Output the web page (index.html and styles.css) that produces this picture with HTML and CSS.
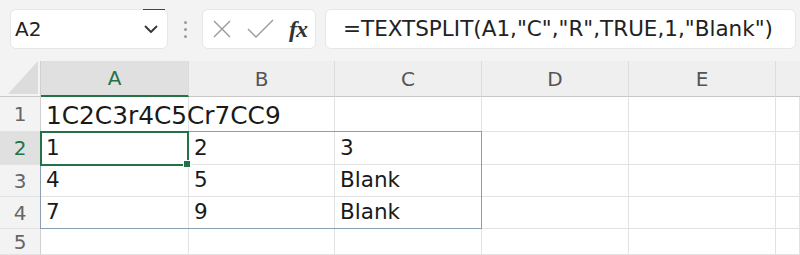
FILE: index.html
```html
<!DOCTYPE html>
<html>
<head>
<meta charset="utf-8">
<link rel="stylesheet" href="styles.css">
</head>
<body>
<div class="toolbar">
  <div class="namebox">
    <span class="namebox-text">A2</span>
    <svg class="chevron" width="14" height="9" viewBox="0 0 14 9"><path d="M1.5 1.5 L7 7 L12.5 1.5" fill="none" stroke="#333" stroke-width="1.8" stroke-linecap="round" stroke-linejoin="round"/></svg>
    <span class="grip"></span>
  </div>
  <div class="dots"><i></i><i></i><i></i></div>
  <div class="fxbox">
    <svg class="icon-x" width="20" height="20" viewBox="0 0 20 20"><path d="M2 2 L18 18 M18 2 L2 18" stroke="#9a9a9a" stroke-width="1.4" fill="none"/></svg>
    <svg class="icon-check" width="28" height="20" viewBox="0 0 28 20"><path d="M1 10 L9 18 L26 1" stroke="#9a9a9a" stroke-width="1.4" fill="none"/></svg>
    <span class="fx">fx</span>
  </div>
  <div class="formula">=TEXTSPLIT(A1,"C","R",TRUE,1,"Blank")</div>
</div>
<div class="sheet">
  <div class="corner"><span class="tri"></span></div>
  <div class="ch sel">A</div><div class="ch">B</div><div class="ch">C</div><div class="ch">D</div><div class="ch">E</div><div class="ch last"></div>

  <div class="rh">1</div>
  <div class="c wide">1C2C3r4C5Cr7CC9</div><div class="c"></div><div class="c"></div><div class="c"></div><div class="c"></div><div class="c"></div>

  <div class="rh sel">2</div>
  <div class="c">1</div><div class="c">2</div><div class="c">3</div><div class="c"></div><div class="c"></div><div class="c"></div>

  <div class="rh">3</div>
  <div class="c">4</div><div class="c">5</div><div class="c">Blank</div><div class="c"></div><div class="c"></div><div class="c"></div>

  <div class="rh">4</div>
  <div class="c">7</div><div class="c">9</div><div class="c">Blank</div><div class="c"></div><div class="c"></div><div class="c"></div>

  <div class="rh">5</div>
  <div class="c"></div><div class="c"></div><div class="c"></div><div class="c"></div><div class="c"></div><div class="c"></div>

  <div class="spill"></div>
  <div class="selection"><span class="handle"></span></div>
</div>
</body>
</html>
```
FILE: styles.css
```css
html, body {
  margin: 0;
  padding: 0;
}
body {
  width: 800px;
  height: 255px;
  overflow: hidden;
  background: #f3f3f3;
  font-family: "DejaVu Sans", "Noto Sans CJK JP", sans-serif;
  color: #222;
}
.toolbar {
  height: 61px;
  box-sizing: border-box;
  padding: 9px 0 0 10px;
  display: flex;
  align-items: flex-start;
}
.namebox {
  position: relative;
  width: 158px;
  height: 40px;
  box-sizing: border-box;
  background: #fff;
  border-radius: 6px;
  border: 1px solid #e6e6e6;
  display: flex;
  align-items: center;
  padding: 0 8px 0 4px;
}
.namebox-text {
  font-size: 20px;
  flex: 1;
  color: #222;
}
.chevron {
  margin-right: 1px;
}
.grip {
  position: absolute;
  top: -1px;
  left: 132px;
  width: 22px;
  height: 1px;
  background: #444;
}
.dots {
  width: 34px;
  height: 40px;
  display: flex;
  flex-direction: column;
  align-items: center;
  justify-content: center;
  gap: 4px;
}
.dots i {
  width: 3px;
  height: 3px;
  border-radius: 50%;
  background: #999;
}
.fxbox {
  width: 114px;
  height: 40px;
  box-sizing: border-box;
  background: #fff;
  border-radius: 6px;
  border: 1px solid #e6e6e6;
  display: flex;
  align-items: center;
  padding: 0 0 0 9px;
}
.icon-x {
  margin-right: 15px;
}
.icon-check {
  margin-right: 14px;
}
.fx {
  font-family: "Liberation Serif", "DejaVu Serif", serif;
  font-style: italic;
  font-weight: bold;
  font-size: 24px;
  color: #333;
  letter-spacing: -1px;
}
.formula {
  margin-left: 9px;
  width: 471px;
  height: 40px;
  box-sizing: border-box;
  background: #fff;
  border-radius: 6px;
  border: 1px solid #e6e6e6;
  padding: 0 0 0 17px;
  font-size: 21.5px;
  line-height: 37px;
  white-space: nowrap;
  color: #222;
}
.sheet {
  position: relative;
  display: grid;
  grid-template-columns: 41px 148px 146px 147px 147px 147px 1fr;
  grid-template-rows: 36px 35px 33px 32px 32px 26px;
  background: #fff;
}
.corner {
  background: #f3f3f3;
  border-right: 1px solid #d0d0d0;
  border-bottom: 1px solid #c8c8c8;
  display: flex;
  align-items: flex-end;
  justify-content: flex-end;
  padding: 0 2px 2px 0;
}
.tri {
  width: 30px;
  height: 33px;
  background: #dcdcdc;
  clip-path: polygon(100% 0, 100% 100%, 0 100%);
}
.ch {
  background: #efefef;
  border-right: 1px solid #dcdcdc;
  border-bottom: 1px solid #c6c6c6;
  display: flex;
  align-items: center;
  justify-content: center;
  font-size: 20px;
  color: #555;
}
.ch.sel {
  background: #e0e0e0;
  color: #217346;
  border-bottom: 2px solid #217346;
}
.ch.last {
  border-right: none;
}
.rh {
  background: #f3f3f3;
  border-right: 1px solid #d0d0d0;
  border-bottom: 1px solid #e2e2e2;
  display: flex;
  align-items: center;
  justify-content: center;
  font-size: 20px;
  color: #666;
}
.rh.sel {
  background: #e0e0e0;
  color: #217346;
}
.c {
  border-right: 1px solid #e2e2e2;
  border-bottom: 1px solid #e2e2e2;
  font-size: 21.5px;
  color: #1a1a1a;
  padding: 0 0 3px 5px;
  display: flex;
  align-items: flex-end;
  line-height: 26px;
  white-space: nowrap;
}
.c.wide {
  font-size: 24.8px;
  padding-bottom: 2px;
}
.spill {
  position: absolute;
  left: 40px;
  top: 70px;
  width: 442px;
  height: 98px;
  box-sizing: border-box;
  border: 1px solid #8b9db3;
}
.selection {
  position: absolute;
  left: 40px;
  top: 70px;
  width: 149px;
  height: 35px;
  box-sizing: border-box;
  border: 2px solid #217346;
}
.handle {
  position: absolute;
  right: -4px;
  bottom: -4px;
  width: 6px;
  height: 6px;
  background: #217346;
  border: 1px solid #fff;
}
```
